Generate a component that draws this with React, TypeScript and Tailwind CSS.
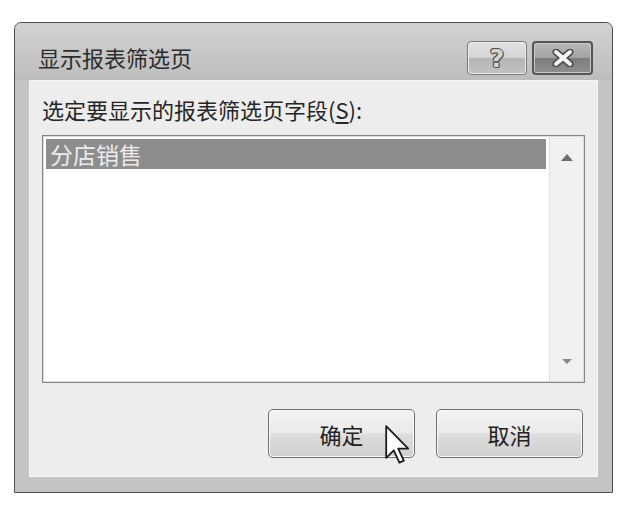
const cjk = "font-['Noto_Sans_CJK_SC','Noto_Sans',sans-serif]";

const TitleButtons = () => (
  <div className="mt-[18px] mr-[19px] flex gap-[5px]">
    <div className="w-[60px] h-[34px] rounded-[4px] border border-[#7a7a7a] bg-[linear-gradient(#e2e2e2_0%,#d4d4d4_48%,#b4b4b4_52%,#c2c2c2_100%)] shadow-[inset_0_0_0_1px_#ececec] flex items-center justify-center">
      <span className="font-['DejaVu_Sans',sans-serif] text-[25px] font-bold leading-none text-[#d4d4d4] [text-shadow:1px_0_0_#4f4f4f,-1px_0_0_#4f4f4f,0_1px_0_#4f4f4f,0_-1px_0_#4f4f4f,1px_1px_0_#4f4f4f,-1px_-1px_0_#4f4f4f]">
        ?
      </span>
    </div>
    <div className="w-[61px] h-[34px] rounded-[4px] border-2 border-[#555555] bg-[linear-gradient(#b9b9b9_0%,#a3a3a3_48%,#7c7c7c_52%,#8f8f8f_100%)] shadow-[inset_0_0_0_1px_#c9c9c9] flex items-center justify-center">
      <svg width="24" height="18" viewBox="0 0 24 18">
        <path d="M5 3 L19 15 M19 3 L5 15" stroke="#4a4a4a" strokeWidth="7" strokeLinecap="round" />
        <path d="M5 3 L19 15 M19 3 L5 15" stroke="#f4f4f4" strokeWidth="4" strokeLinecap="round" />
      </svg>
    </div>
  </div>
);

const Cursor = () => (
  <svg
    className="absolute left-[116px] top-[15px]"
    width="25"
    height="39"
    viewBox="0 0 12.5 19.5"
  >
    <path
      d="M0.6 0.6 L0.6 16.4 L4.4 12.7 L7.2 18.8 L9.4 17.8 L6.6 11.8 L11.6 11.8 Z"
      fill="#ffffff"
      stroke="#1a1a1a"
      strokeWidth="0.9"
      strokeLinejoin="round"
    />
  </svg>
);

const DialogButton = ({ label, children }: { label: string; children?: React.ReactNode }) => (
  <div className="relative w-[147px] h-[49px] rounded-[5px] border border-[#6f6f6f] bg-[linear-gradient(#f3f3f3_0%,#ebebeb_48%,#dddddd_52%,#cfcfcf_100%)] shadow-[inset_0_0_0_1px_#fafafa] flex items-center justify-center">
    <span className={`${cjk} text-[22px] leading-none text-[#222222]`}>{label}</span>
    {children}
  </div>
);

export default function App() {
  return (
    <div className="w-[640px] h-[516px] bg-white pt-[22px] pl-[14px]">
      <div className="w-[599px] h-[471px] rounded-t-[7px] border border-[#4d4d4d] bg-[#c4c4c4] flex flex-col">
        <div className="h-[57px] flex items-start justify-between bg-[linear-gradient(#d2d2d2,#bdbdbd)] rounded-t-[6px]">
          <span className={`${cjk} mt-[19px] ml-[23px] text-[22px] leading-[30px] text-[#2c2c2c]`}>
            显示报表筛选页
          </span>
          <TitleButtons />
        </div>

        <div className="mx-[14px] h-[397px] bg-[#ededed] border border-[#f6f6f6] flex flex-col">
          <div className={`${cjk} mt-[13px] ml-[12px] text-[22px] leading-[30px] text-[#262626]`}>
            选定要显示的报表筛选页字段(<span className="underline underline-offset-[3px]">S</span>):
          </div>

          <div className="mt-[11px] mx-[12px] h-[248px] border border-[#858585] shadow-[inset_0_0_0_1px_#dcdcdc] bg-white flex">
            <div className="flex-1 p-[3px]">
              <div className="h-[30px] bg-[#8d8d8d] pl-[4px] flex items-center">
                <span className={`${cjk} text-[23px] leading-none text-[#ececec]`}>分店销售</span>
              </div>
            </div>
            <div className="w-[34px] my-[1px] mr-[1px] border-l border-[#e0e0e0] bg-[#f1f1f1] flex flex-col justify-between">
              <div className="h-[40px] flex items-center justify-center">
                <svg width="14" height="9" viewBox="0 0 14 9">
                  <path d="M7 1 L13 8 L1 8 Z" fill="#6e6e6e" />
                </svg>
              </div>
              <div className="h-[40px] flex items-center justify-center">
                <svg width="12" height="7" viewBox="0 0 12 7">
                  <path d="M1 1 L11 1 L6 6 Z" fill="#8a8a8a" />
                </svg>
              </div>
            </div>
          </div>

          <div className="mt-[26px] mr-[14px] flex justify-end gap-[21px]">
            <DialogButton label="确定">
              <Cursor />
            </DialogButton>
            <DialogButton label="取消" />
          </div>
        </div>
      </div>
    </div>
  );
}
